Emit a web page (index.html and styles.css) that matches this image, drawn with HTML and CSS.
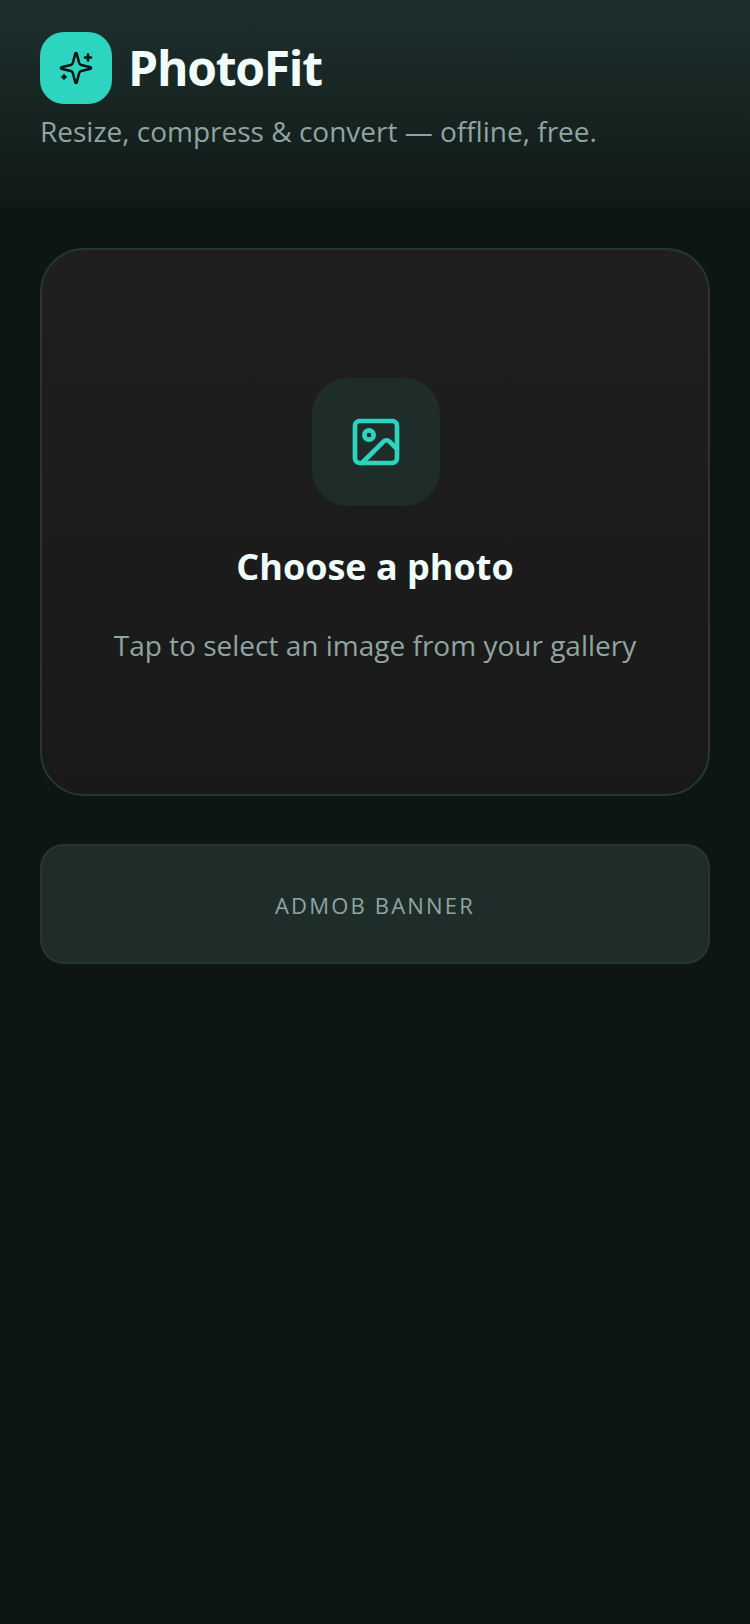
FILE: index.html
```html
<!DOCTYPE html>
<html lang="en">
<head>
    <meta charset="UTF-8">
    <meta name="viewport" content="width=device-width, initial-scale=1.0">
    <title>PhotoFit</title>
    <link rel="stylesheet" href="styles.css">
</head>
<body>

<header class="top">
    <div class="brand">
        <div class="brand-icon">
            <svg width="36" height="36" viewBox="0 0 24 24" fill="none" stroke="#0d1514" stroke-width="1.7" stroke-linecap="round" stroke-linejoin="round">
                <path d="M9.937 15.5A2 2 0 0 0 8.5 14.063l-6.135-1.582a.5.5 0 0 1 0-.962L8.5 9.936A2 2 0 0 0 9.937 8.5l1.582-6.135a.5.5 0 0 1 .963 0L14.063 8.5A2 2 0 0 0 15.5 9.937l6.135 1.581a.5.5 0 0 1 0 .964L15.5 14.063a2 2 0 0 0-1.437 1.437l-1.582 6.135a.5.5 0 0 1-.963 0z"/>
                <path d="M20 3v4"/>
                <path d="M22 5h-4"/>
                <path d="M4 17v2"/>
                <path d="M5 18H3"/>
            </svg>
        </div>
        <h1>PhotoFit</h1>
    </div>
    <p class="tagline">Resize, compress &amp; convert — offline, free.</p>
</header>

<main class="content">
    <div class="picker">
        <div class="picker-icon">
            <svg width="56" height="56" viewBox="0 0 24 24" fill="none" stroke="#2dd4bf" stroke-width="2" stroke-linecap="round" stroke-linejoin="round">
                <rect x="3" y="3" width="18" height="18" rx="2" ry="2"/>
                <circle cx="9" cy="9" r="2"/>
                <path d="m21 15-3.086-3.086a2 2 0 0 0-2.828 0L6 21"/>
            </svg>
        </div>
        <h2>Choose a photo</h2>
        <p>Tap to select an image from your gallery</p>
    </div>

    <div class="ad-banner">ADMOB BANNER</div>
</main>

</body>
</html>
```

FILE: styles.css
```css
html {
    height: 100%;
    background-color: #0d1614;
}

body {
    font-family: 'Open Sans', sans-serif;
    margin: 0;
    padding: 0;
    min-height: 100vh;
    color: #ffffff;
    background-color: #0d1614;
}

.top {
    height: 208px;
    box-sizing: border-box;
    padding: 32px 40px 0;
    background: linear-gradient(to bottom, #1e2f2d 0%, #101a18 100%);
}

.brand {
    display: flex;
    align-items: center;
    gap: 16px;
}

.brand-icon {
    width: 72px;
    height: 72px;
    border-radius: 24px;
    background-color: #2dd4bf;
    display: flex;
    align-items: center;
    justify-content: center;
}

.brand h1 {
    margin: 0;
    font-size: 48px;
    font-weight: 700;
    line-height: 72px;
    letter-spacing: -1.25px;
    color: #f0fdfa;
}

.tagline {
    margin: 7px 0 0;
    font-size: 28px;
    line-height: 40px;
    color: #8fa5a0;
}

.content {
    padding: 40px 40px 0;
}

.picker {
    height: 548px;
    box-sizing: border-box;
    border: 2px solid #263633;
    border-radius: 44px;
    background: linear-gradient(to bottom, #1f1f1f 0%, #191919 100%);
    display: flex;
    flex-direction: column;
    align-items: center;
    justify-content: center;
}

.picker-icon {
    width: 128px;
    height: 128px;
    margin-left: 2px;
    border-radius: 36px;
    background-color: #1e2d2a;
    display: flex;
    align-items: center;
    justify-content: center;
}

.picker h2 {
    margin: 35px 0 0;
    font-size: 36px;
    font-weight: 700;
    line-height: 52px;
    color: #f0fdfa;
}

.picker p {
    margin: 32px 0 1px;
    font-size: 28px;
    line-height: 40px;
    color: #8fa5a0;
}

.ad-banner {
    height: 120px;
    box-sizing: border-box;
    margin-top: 48px;
    padding-top: 2px;
    border: 2px solid #263633;
    border-radius: 24px;
    background-color: #1e2d2a;
    display: flex;
    align-items: center;
    justify-content: center;
    font-size: 22px;
    letter-spacing: 2.2px;
    color: #8fa5a0;
}
```
